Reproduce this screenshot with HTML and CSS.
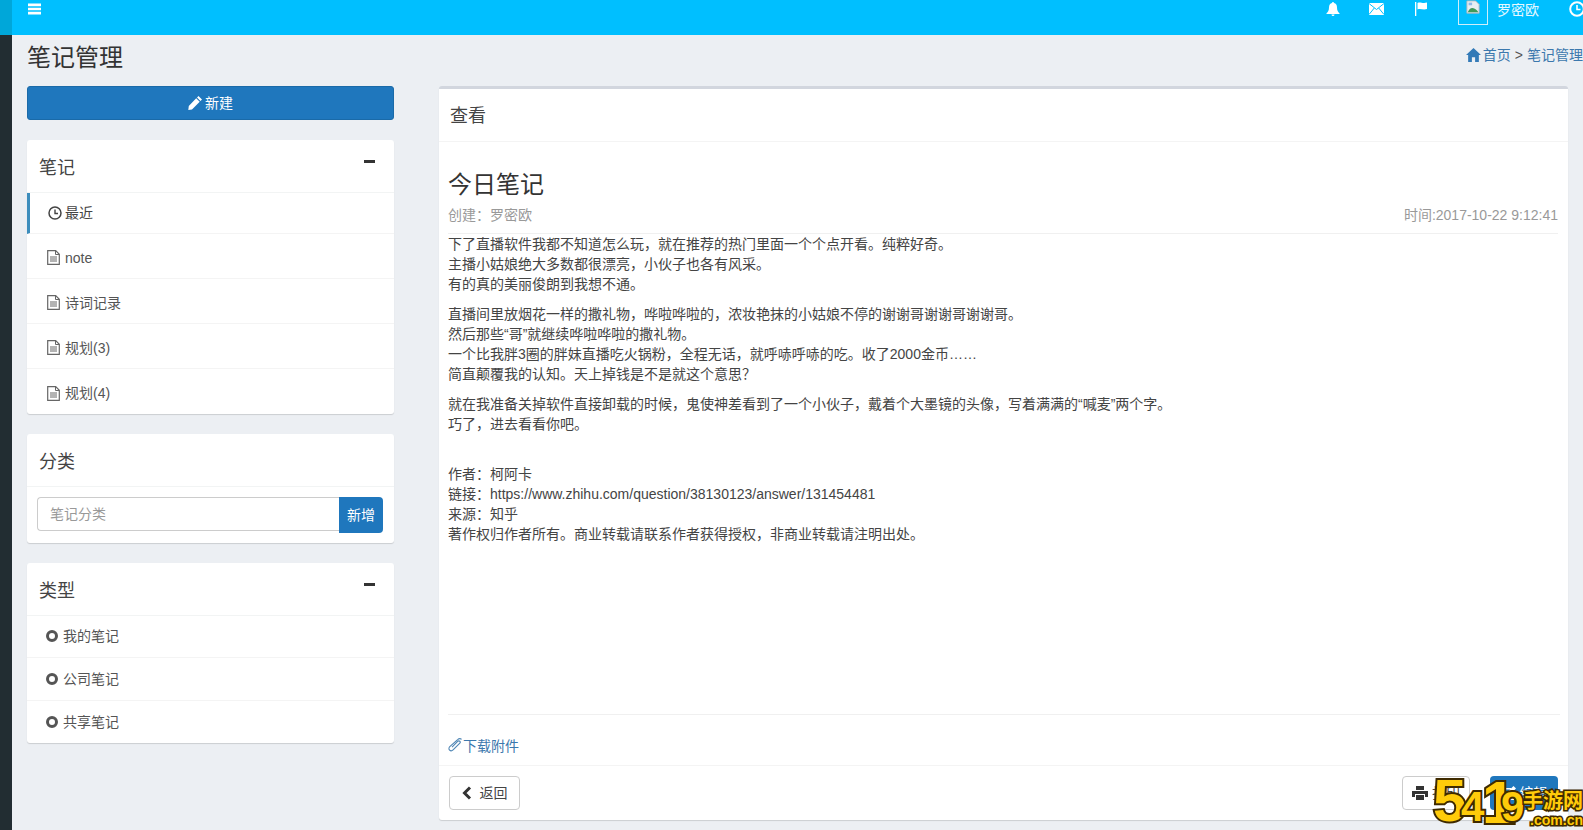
FILE: index.html
```html
<!DOCTYPE html>
<html lang="zh">
<head>
<meta charset="utf-8">
<title>笔记管理</title>
<link rel="stylesheet" href="styles.css">
</head>
<body>
<div class="app">
  <header class="topbar">
    <div class="logo-strip"></div>
    <div class="nav">
      <svg class="ic menu" viewBox="0 0 14 12"><path d="M0 0h14v3H0zM0 4.700h14v2.600H0zM0 9h14v3H0z" fill="#fff"/></svg>
      <div class="nav-right">
        <svg class="ic bell" viewBox="0 0 14 14"><path d="M7 0a1 1 0 0 1 1 1.100C10 1.600 11 3.200 11 5.500c0 3 1 4.500 2.500 5.800V12H.5v-.7C2 10 3 8.500 3 5.500 3 3.200 4 1.600 6 1.100A1 1 0 0 1 7 0zM5.500 12.500h3a1.500 1.500 0 0 1-3 0z" fill="#fff"/></svg>
        <svg class="ic mail" viewBox="0 0 15 12"><path d="M0 0h15v12H0z" fill="#fff"/><path d="M0 .5l7.500 6 7.500-6M0 11.500l5.300-6.500M15 11.500L9.700 5" fill="none" stroke="#00bfff" stroke-width="1"/></svg>
        <svg class="ic flag" viewBox="0 0 13 14"><path d="M0 0h1.300v14H0z" fill="#fff"/><path d="M2.500 1c3-1.300 5 1 9.500-.4V7c-4 1.400-6.500-1-9.500.4z" fill="#fff"/></svg>
        <div class="avatar">
          <svg class="broken" viewBox="0 0 16 16"><path d="M1 1h10l4 4v10H1z" fill="#e8eef2" stroke="#a9b4ba"/><path d="M2 14c2-5 5-6 8-4 2 1 3 2 4 4z" fill="#3f9a5b"/><path d="M3 3h4v3H3z" fill="#8fb8e8"/></svg>
        </div>
        <span class="user">罗密欧</span>
        <svg class="ic clock-top" viewBox="0 0 16 16"><circle cx="8" cy="8" r="6.800" fill="none" stroke="#fff" stroke-width="2"/><path d="M8 4v4.500h3.500" fill="none" stroke="#fff" stroke-width="1.600"/></svg>
      </div>
    </div>
  </header>
  <div class="below">
    <aside class="rail"></aside>
    <main class="content">
      <div class="page-head">
        <h1 class="page-title">笔记管理</h1>
        <div class="crumbs">
          <svg class="ic home" viewBox="0 0 14 13"><path d="M7 0l7 6.500h-2V13H8.500V8.500h-3V13H2V6.500H0z" fill="#337ab7"/></svg>
          <a class="link">首页</a><span class="sep">&gt;</span><a class="link">笔记管理</a>
        </div>
      </div>
      <div class="columns">
        <div class="left">
          <button class="btn-new">
            <svg class="ic pen" viewBox="0 0 14 14"><path d="M10.500 0L14 3.500 12.500 5 9 1.500zM8.200 2.300l3.500 3.500L4 13.500.3 14 .8 10z" fill="#fff"/></svg>新建
          </button>
          <section class="box">
            <div class="box-head"><h3 class="box-title">笔记</h3><span class="minus"></span></div>
            <ul class="list files">
              <li class="row active">
                <svg class="ic row-ic" viewBox="0 0 14 14"><circle cx="7" cy="7" r="6" fill="none" stroke="#444" stroke-width="1.500"/><path d="M7 3.500v4h3" fill="none" stroke="#444" stroke-width="1.400"/></svg>最近
              </li>
              <li class="row"><svg class="ic row-ic file" viewBox="0 0 13 15"><path d="M.7.700h8l3.600 3.600v10H.7z" fill="none" stroke="#666" stroke-width="1.200"/><path d="M8.500.700v3.800h3.800M3 7h7M3 9h7M3 11h7" fill="none" stroke="#666"/></svg>note</li>
              <li class="row"><svg class="ic row-ic file" viewBox="0 0 13 15"><path d="M.7.700h8l3.600 3.600v10H.7z" fill="none" stroke="#666" stroke-width="1.200"/><path d="M8.500.700v3.800h3.800M3 7h7M3 9h7M3 11h7" fill="none" stroke="#666"/></svg>诗词记录</li>
              <li class="row"><svg class="ic row-ic file" viewBox="0 0 13 15"><path d="M.7.700h8l3.600 3.600v10H.7z" fill="none" stroke="#666" stroke-width="1.200"/><path d="M8.500.700v3.800h3.800M3 7h7M3 9h7M3 11h7" fill="none" stroke="#666"/></svg>规划(3)</li>
              <li class="row"><svg class="ic row-ic file" viewBox="0 0 13 15"><path d="M.7.700h8l3.600 3.600v10H.7z" fill="none" stroke="#666" stroke-width="1.200"/><path d="M8.500.700v3.800h3.800M3 7h7M3 9h7M3 11h7" fill="none" stroke="#666"/></svg>规划(4)</li>
            </ul>
          </section>
          <section class="box">
            <div class="box-head"><h3 class="box-title">分类</h3></div>
            <div class="add-row">
              <input class="cat-input" type="text" placeholder="笔记分类">
              <button class="btn-add">新增</button>
            </div>
          </section>
          <section class="box">
            <div class="box-head"><h3 class="box-title">类型</h3><span class="minus"></span></div>
            <ul class="list types">
              <li class="type"><span class="ring"></span>我的笔记</li>
              <li class="type"><span class="ring"></span>公司笔记</li>
              <li class="type"><span class="ring"></span>共享笔记</li>
            </ul>
          </section>
        </div>
        <section class="viewer">
          <div class="viewer-head">查看</div>
          <div class="viewer-body">
            <h2 class="note-title">今日笔记</h2>
            <div class="meta"><span>创建：罗密欧</span><span>时间:2017-10-22 9:12:41</span></div>
            <div class="note">
              <p>下了直播软件我都不知道怎么玩，就在推荐的热门里面一个个点开看。纯粹好奇。<br>主播小姑娘绝大多数都很漂亮，小伙子也各有风采。<br>有的真的美丽俊朗到我想不通。</p>
              <p>直播间里放烟花一样的撒礼物，哗啦哗啦的，浓妆艳抹的小姑娘不停的谢谢哥谢谢哥谢谢哥。<br>然后那些“哥”就继续哗啦哗啦的撒礼物。<br>一个比我胖3圈的胖妹直播吃火锅粉，全程无话，就呼哧呼哧的吃。收了2000金币……<br>简直颠覆我的认知。天上掉钱是不是就这个意思？</p>
              <p>就在我准备关掉软件直接卸载的时候，鬼使神差看到了一个小伙子，戴着个大墨镜的头像，写着满满的“喊麦”两个字。<br>巧了，进去看看你吧。</p>
              <p class="source">作者：柯阿卡<br>链接：https://www.zhihu.com/question/38130123/answer/131454481<br>来源：知乎<br>著作权归作者所有。商业转载请联系作者获得授权，非商业转载请注明出处。</p>
            </div>
            <div class="attach">
              <a class="link attach-link">
                <svg class="clip" viewBox="0 0 16 16"><path d="M14.500 2c-1.300-1.300-3-1-4.200.2L1.900 9.800c-1 1-1.200 2.700-.2 3.700s2.700.8 3.700-.2l7-7c.7-.7.8-1.700.2-2.300s-1.600-.5-2.300.2l-6 6" fill="none" stroke="#4f86b5" stroke-width="1.200"/></svg>下载附件
              </a>
            </div>
          </div>
          <div class="viewer-foot">
            <button class="btn-plain back">
              <svg class="ic chev" viewBox="0 0 10 14"><path d="M8 1.500L2.500 7 8 12.500" fill="none" stroke="#333" stroke-width="3"/></svg>返回
            </button>
            <div class="foot-right">
              <button class="btn-plain print">
                <svg class="ic printer" viewBox="0 0 16 14"><path d="M4 0h8v4H4zM0 5h16v6h-3V8H3v3H0zM4 9h8v5H4z" fill="#333"/></svg>打印
              </button>
              <button class="btn-edit">
                <svg class="ic edit" viewBox="0 0 15 15"><path d="M1 2h9v1.500H2.500v9h9V8H13v6H1z" fill="#fff"/><path d="M12.500 0L15 2.500 8 9.500 5 10l.5-3z" fill="#fff"/></svg>编辑
              </button>
            </div>
          </div>
        </section>
      </div>
    </main>
  </div>
</div>
<div class="watermark">
  <div class="wm-num">
    <span class="wm-d d5">5</span><span class="wm-d d4">4</span><span class="wm-d d1">1</span><span class="wm-d d9">9</span>
  </div>
  <div class="wm-side"><span class="wm-cn">手游网</span><span class="wm-com">.com.cn</span></div>
</div>
</body>
</html>
```
FILE: styles.css
```css
* { box-sizing: border-box; }
html, body { margin: 0; height: 830px; overflow: hidden; }
body {
  font-family: "Liberation Sans", "Noto Sans CJK SC", sans-serif;
  font-size: 14px;
  line-height: 20px;
  color: #444;
  background: #eceff3;
  position: relative;
}
h1, h2, h3, p, ul { margin: 0; padding: 0; font-weight: 400; }
ul { list-style: none; }
button { font: inherit; cursor: pointer; }
.ic { display: block; flex: none; }

.app { display: flex; flex-direction: column; height: 830px; width: 1583px; }
.topbar { display: flex; height: 35px; flex: none; background: #00bfff; }
.logo-strip { width: 12px; background: #00a7d9; }
.nav { flex: 1; display: flex; justify-content: space-between; align-items: flex-start; padding-left: 16px; overflow: hidden; }
.menu { width: 13px; height: 12px; margin-top: 3px; }
.nav-right { display: flex; align-items: flex-start; color: #fff; margin-right: -2px; }
.bell { width: 14px; height: 14px; margin: 2px 0 0; }
.mail { width: 15px; height: 12px; margin: 3px 0 0 29px; }
.flag { width: 13px; height: 14px; margin: 2px 0 0 31px; }
.avatar { width: 30px; height: 25px; margin-left: 30px; border: 1px solid #cfeefa; border-top: 0; display: flex; justify-content: center; overflow: hidden; }
.broken { width: 16px; height: 14px; }
.user { margin-left: 9px; width: 44px; font-size: 14px; line-height: 20px; color: #e6f8ff; }
.clock-top { width: 16px; height: 16px; margin: 1px 0 0 28px; }

.below { flex: 1; display: flex; min-height: 0; }
.rail { width: 12px; flex: none; background: #222d32; }
.content { flex: 1; padding: 0 15px; min-width: 0; }
.page-head { display: flex; justify-content: space-between; height: 51px; padding-top: 9px; margin-right: -15px; }
.page-title { font-size: 24px; line-height: 28px; color: #333; }
.crumbs { display: flex; align-items: center; height: 20px; margin-top: 1px; font-size: 14px; white-space: nowrap; }
.home { width: 15px; height: 14px; margin-right: 2px; }
.link { color: #3c78ad; }
.sep { margin: 0 4px; color: #555; }

.columns { display: flex; gap: 45px; align-items: flex-start; }
.left { width: 367px; flex: none; display: flex; flex-direction: column; gap: 20px; }
.btn-new { display: flex; align-items: center; justify-content: center; gap: 3px; height: 34px; background: #1f77bd; color: #fff; border: 1px solid #1a6aa8; border-radius: 3px; }
.pen { width: 14px; height: 14px; }
.box { background: #fff; border-radius: 3px; box-shadow: 0 1px 1px rgba(0,0,0,.14); }
.box-head { display: flex; justify-content: space-between; height: 53px; padding: 17px 12px 0; border-bottom: 1px solid #f2f4f4; }
.box-title { font-size: 18px; line-height: 22px; color: #444; }
.minus { width: 11px; height: 3px; background: #333; margin-top: 3px; margin-right: 7px; }
.row { display: flex; align-items: center; height: 45px; padding: 3px 0 0 20px; border-bottom: 1px solid #f4f4f4; color: #555; }
.row:last-child { border-bottom: 0; }
.row.active { height: 41px; border-left: 3px solid #3c8dbc; padding: 0 0 0 18px; color: #444; }
.row-ic { width: 14px; height: 14px; margin-right: 3px; }
.file { width: 13px; height: 15px; margin-right: 5px; }
.add-row { display: flex; padding: 10px 11px 10px 10px; }
.cat-input { flex: 1; min-width: 0; height: 34px; padding: 0 12px; border: 1px solid #ccc; border-right: 0; border-radius: 4px 0 0 4px; font: inherit; color: #555; background: #fff; outline: 0; }
.cat-input::placeholder { color: #999; opacity: 1; }
.btn-add { width: 44px; height: 36px; padding: 0; background: #1f77bd; color: #fff; border: 0; border-radius: 0 4px 4px 0; }
.type { display: flex; align-items: center; height: 43px; padding: 0 0 1px 19px; border-bottom: 1px solid #f4f4f4; color: #555; }
.type:first-child { height: 42px; padding-bottom: 2px; }
.type:last-child { height: 42px; border-bottom: 0; }
.ring { width: 12px; height: 12px; border: 3px solid #555; border-radius: 50%; margin-right: 5px; }

.viewer { width: 1129px; height: 734px; background: #fff; border-top: 3px solid #d2d6de; border-radius: 3px; box-shadow: 0 1px 1px rgba(0,0,0,.14); display: flex; flex-direction: column; flex: none; }
.viewer-head { height: 53px; padding: 16px 11px 0; flex: none; font-size: 18px; line-height: 22px; color: #444; border-bottom: 1px solid #f4f4f4; }
.viewer-body { flex: 1; display: flex; flex-direction: column; padding: 0 10px 0 9px; min-height: 0; }
.note-title { font-size: 24px; line-height: 28px; color: #333; margin-top: 29px; }
.meta { display: flex; justify-content: space-between; height: 33px; padding-top: 4px; margin-top: 2px; color: #999; border-bottom: 1px solid #f0f0f0; }
.note { flex: 1; color: #444; }
.note p { margin-bottom: 10px; }
.note p.source { margin-top: 30px; }
.attach { height: 51px; padding-top: 21px; margin-right: -2px; border-top: 1px solid #f0f0f0; }
.attach-link { display: flex; align-items: center; }
.clip { width: 15px; height: 16px; margin-top: -3px; flex: none; }
.viewer-foot { height: 55px; flex: none; display: flex; justify-content: space-between; padding: 10px 10px 0 10px; border-top: 1px solid #f4f4f4; }
.foot-right { display: flex; gap: 20px; }
.btn-plain { display: flex; align-items: center; justify-content: center; height: 34px; background: #fff; border: 1px solid #ccc; border-radius: 4px; color: #444; }
.back { width: 71px; gap: 8px; }
.chev { width: 10px; height: 14px; }
.print { width: 68px; gap: 4px; }
.printer { width: 16px; height: 14px; }
.btn-edit { display: flex; align-items: center; justify-content: center; gap: 4px; width: 68px; height: 34px; background: #1f77bd; color: #fff; border: 0; border-radius: 4px; }
.edit { width: 15px; height: 15px; }

.watermark { position: absolute; left: 1433px; top: 776px; width: 150px; height: 54px; display: flex; font-family: "Liberation Sans", "Noto Sans CJK SC", sans-serif; font-weight: 700; color: #ffcb0a; paint-order: stroke fill; -webkit-text-stroke: 4px #3f2a00; }
.wm-num { width: 88px; flex: none; display: flex; align-items: flex-end; height: 51px; }
.wm-d { display: block; line-height: 1; paint-order: stroke fill; }
.d5 { font-size: 60px; width: 28px; margin-bottom: -4px; }
.d4 { font-size: 42px; width: 21px; margin-bottom: -1px; }
.d1 { font-size: 60px; width: 19px; margin-bottom: -6px; }
.d9 { font-size: 42px; width: 20px; margin-bottom: -1px; }
.wm-side { flex: 1; display: flex; flex-direction: column; align-items: flex-end; padding-top: 11px; }
.wm-cn { font-family: "Noto Sans CJK SC", sans-serif; font-size: 20px; line-height: 25px; white-space: nowrap; -webkit-text-stroke: 3px #3f2a00; paint-order: stroke fill; }
.wm-com { font-size: 14px; line-height: 16px; white-space: nowrap; -webkit-text-stroke: 3px #3f2a00; paint-order: stroke fill; }
```
